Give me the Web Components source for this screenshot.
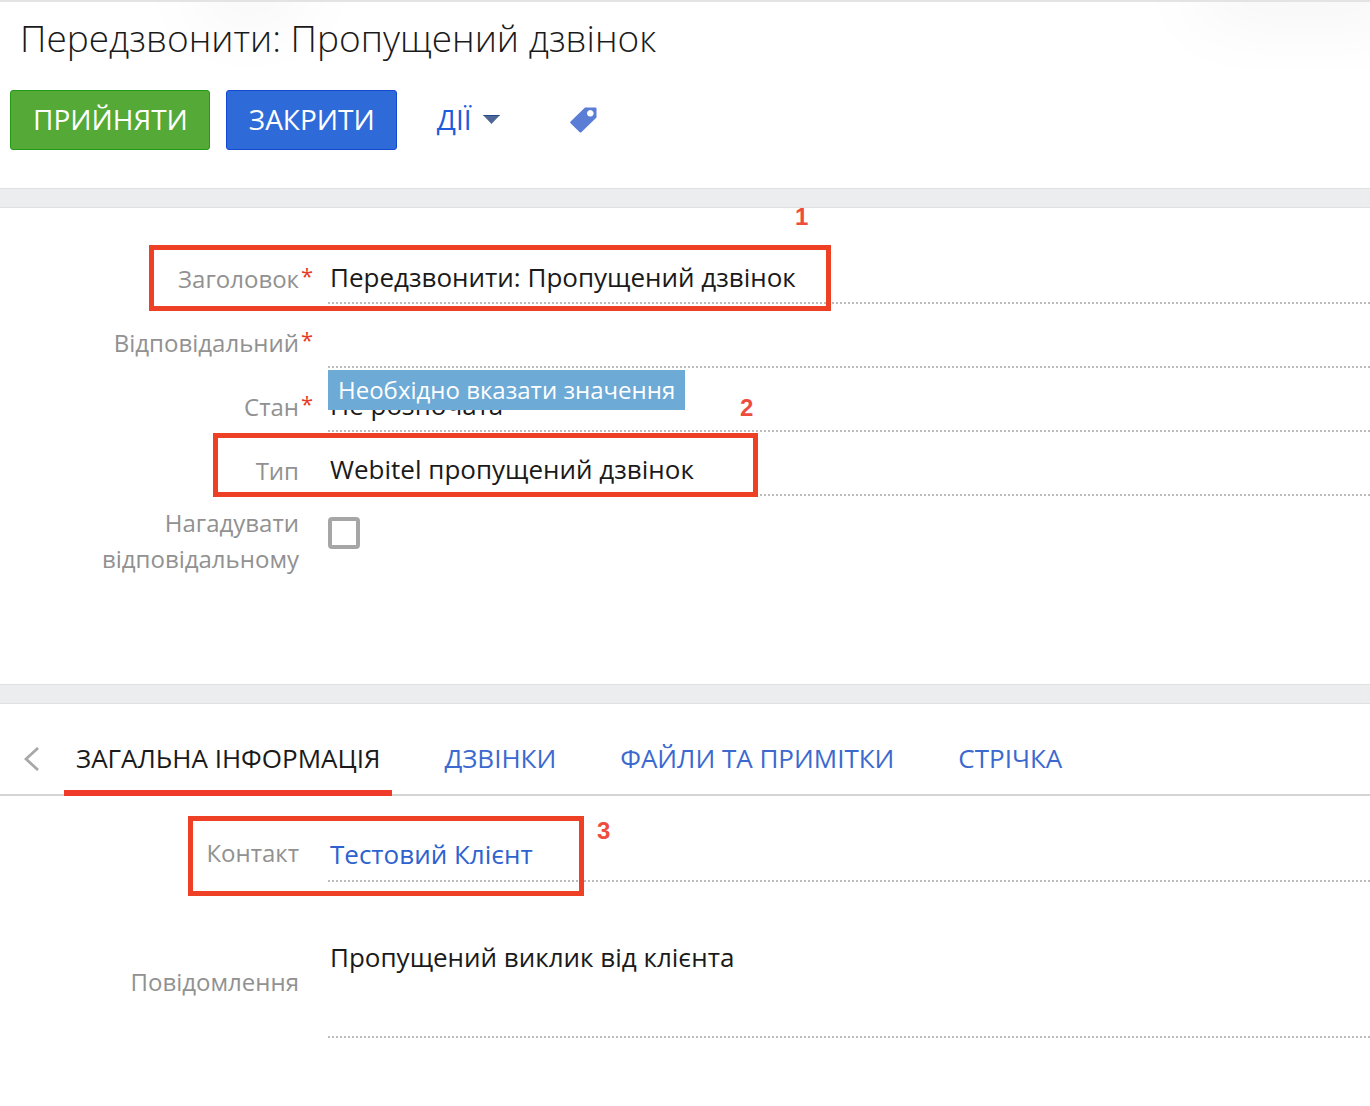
<!DOCTYPE html>
<html lang="uk">
<head>
<meta charset="utf-8">
<meta name="viewport" content="width=device-width, initial-scale=1">
<title>Передзвонити: Пропущений дзвінок</title>
<style>
  body {
    margin: 0;
    background: #fff;
    color: #1a1a1a;
    font-family: "Open Sans", "Noto Sans", sans-serif;
    font-size: 26px;
  }
</style>
</head>
<body>

<task-page>
  <page-header slot="header">
    <span slot="title">Передзвонити: Пропущений дзвінок</span>
    <action-button slot="actions" color="green">ПРИЙНЯТИ</action-button>
    <action-button slot="actions" color="blue">ЗАКРИТИ</action-button>
    <actions-menu slot="actions">ДІЇ</actions-menu>
    <tag-button slot="actions"></tag-button>
  </page-header>

  <form-section slot="profile" class="profile">
    <form-field label="Заголовок" value="Передзвонити: Пропущений дзвінок" required></form-field>
    <form-field label="Відповідальний" error="Необхідно вказати значення" required></form-field>
    <form-field label="Стан" value="Не розпочата" required></form-field>
    <form-field label="Тип" value="Webitel пропущений дзвінок"></form-field>
    <form-field label="Нагадувати відповідальному" type="checkbox"></form-field>
    <mark-box slot="marks" x="149" y="37" width="682" height="66"></mark-box>
    <mark-number slot="marks" x="795" y="-5">1</mark-number>
    <mark-box slot="marks" x="213" y="225" width="545" height="64"></mark-box>
    <mark-number slot="marks" x="740" y="186">2</mark-number>
  </form-section>

  <tab-bar slot="tabs">
    <tab-link active>ЗАГАЛЬНА ІНФОРМАЦІЯ</tab-link>
    <tab-link>ДЗВІНКИ</tab-link>
    <tab-link>ФАЙЛИ ТА ПРИМІТКИ</tab-link>
    <tab-link>СТРІЧКА</tab-link>
  </tab-bar>

  <form-section slot="details" class="details">
    <form-field label="Контакт" value="Тестовий Клієнт" type="link"></form-field>
    <form-field label="Повідомлення" value="Пропущений виклик від клієнта" type="memo"></form-field>
    <mark-box slot="marks" x="188" y="20" width="396" height="80"></mark-box>
    <mark-number slot="marks" x="597" y="21">3</mark-number>
  </form-section>
</task-page>

<script>
class BaseElement extends HTMLElement {
  render(html) {
    if (!this.shadowRoot) {
      this.attachShadow({mode: 'open'});
    }
    this.shadowRoot.innerHTML = html;
  }
}

class TaskPage extends BaseElement {
  connectedCallback() {
    this.render(`
      <style>
        :host { display: block; }
        .band {
          box-sizing: border-box;
          height: 20px;
          background: #ebedee;
          border-top: 1px solid #dfe0e0;
          border-bottom: 1px solid #dfe0e0;
        }
      </style>
      <slot name="header"></slot>
      <div class="band"></div>
      <slot name="profile"></slot>
      <div class="band"></div>
      <slot name="tabs"></slot>
      <slot name="details"></slot>
    `);
  }
}

class PageHeader extends BaseElement {
  connectedCallback() {
    this.render(`
      <style>
        :host {
          display: block;
          position: relative;
          overflow: hidden;
          border-top: 2px solid #e3e3e3;
          padding: 10px 10px 38px;
        }
        /* soft shadows falling from the panels above the page */
        :host::before, :host::after {
          content: "";
          position: absolute;
          top: -22px;
          height: 20px;
          box-shadow: 0 0 80px rgba(0, 0, 0, .14);
        }
        :host::before { left: 200px; width: 100px; }
        :host::after { left: 1200px; right: -40px; }
        h1 {
          margin: 0 0 26px;
          padding: 0 10px;
          font-size: 37px;
          font-weight: 300;
          line-height: 52px;
        }
        .actions { display: flex; align-items: center; }
      </style>
      <h1><slot name="title"></slot></h1>
      <div class="actions"><slot name="actions"></slot></div>
    `);
  }
}

class ActionButton extends BaseElement {
  connectedCallback() {
    this.render(`
      <style>
        :host { display: block; margin-right: 16px; }
        button {
          height: 60px;
          padding: 0 21px 2px 22px;
          border: 1px solid #239a14;
          border-radius: 3px;
          background: #54a937;
          color: #fff;
          font: inherit;
          font-size: 28px;
          cursor: pointer;
        }
        :host([color="blue"]) button { background: #2f6ad9; border-color: #1247cf; }
      </style>
      <button type="button"><slot></slot></button>
    `);
  }
}

class ActionsMenu extends BaseElement {
  connectedCallback() {
    this.render(`
      <style>
        :host { display: block; margin: 0 70px 0 24px; }
        button {
          display: flex;
          align-items: center;
          gap: 11px;
          padding: 0 0 2px;
          border: 0;
          background: none;
          color: #1f5bdc;
          font: inherit;
          font-size: 28px;
          cursor: pointer;
        }
      </style>
      <button type="button" aria-haspopup="true">
        <slot></slot>
        <svg width="17" height="9" viewBox="0 0 17 9"><path d="M0 0h17L8.500 9z" fill="#4f6797"/><path d="M0 0h17l-1 1H1z" fill="#244a8c"/></svg>
      </button>
    `);
  }
}

class TagButton extends BaseElement {
  connectedCallback() {
    this.render(`
      <style>
        :host { display: block; }
        button { display: block; padding: 0; border: 0; background: none; cursor: pointer; }
        svg { display: block; }
      </style>
      <button type="button" aria-label="Теги">
        <svg width="27" height="26" viewBox="0 0 27 26">
          <path fill="#5a7dd6" fill-rule="evenodd" d="M15 .5h10.500q1 0 1 1V10.500L11.300 25.200q-.8.700-1.600 0L.6 16.200q-.8-.8 0-1.600zM20.300 3a3.300 3.300 0 1 0 .01 0z"/>
        </svg>
      </button>
    `);
  }
}

class FormSection extends BaseElement {
  connectedCallback() {
    this.render(`
      <style>
        :host { display: block; position: relative; }
        :host(.profile) { padding: 32px 0 107px; }
        :host(.details) { padding: 22px 0 64px; }
      </style>
      <slot></slot>
      <slot name="marks"></slot>
    `);
  }
}

class FormField extends BaseElement {
  control() {
    const value = this.getAttribute('value') || '';
    switch (this.getAttribute('type')) {
      case 'checkbox':
        return '<input id="control" type="checkbox">';
      case 'link':
        return `<a id="control" class="line" href="#" aria-labelledby="label">${value}</a>`;
      case 'memo':
        return `<textarea id="control" class="line">${value}</textarea>`;
      default:
        return `<input id="control" class="line" type="text" value="${value}">`;
    }
  }

  connectedCallback() {
    const error = this.getAttribute('error');
    this.render(`
      <style>
        :host {
          display: grid;
          grid-template-columns: 299px 29px minmax(0, 1fr);
          align-items: center;
          position: relative;
        }
        label {
          color: #919191;
          font-size: 24px;
          line-height: 36px;
          padding: 14px 0 0 90px;
          text-align: right;
        }
        .star {
          align-self: start;
          padding: 17px 0 0 2px;
          color: #ea3a24;
          font-size: 22px;
          line-height: 36px;
        }
        .line {
          display: block;
          box-sizing: border-box;
          width: 100%;
          height: 64px;
          margin: 0;
          padding: 12px 2px 0;
          border: 0;
          border-bottom: 2px dotted #bdbdbd;
          border-radius: 0;
          outline: none;
          background: none;
          color: inherit;
          font: inherit;
          line-height: 48px;
        }
        a.line { color: #2d62cf; text-decoration: none; }
        :host([type="link"]) { margin-bottom: 28px; }
        :host([type="link"]) label { padding-top: 6px; }
        textarea.line { height: 128px; padding-top: 23px; resize: none; overflow: hidden; }
        :host([type="memo"]) label { padding-top: 16px; }
        :host([type="checkbox"]) label { padding-top: 9px; }
        input[type="checkbox"] {
          appearance: none;
          align-self: start;
          box-sizing: border-box;
          width: 32px;
          height: 32px;
          margin: 21px 0 0;
          border: 4px solid #a6a6a6;
          border-radius: 4px;
          background: #fff;
        }
        .error {
          position: absolute;
          z-index: 1;
          top: 66px;
          left: 328px;
          padding: 0 10px;
          background: #6daad6;
          color: #fff;
          font-size: 24px;
          line-height: 40px;
        }
      </style>
      <label id="label" for="control">${this.getAttribute('label')}</label>
      <span class="star">${this.hasAttribute('required') ? '*' : ''}</span>
      ${this.control()}
      ${error ? `<div class="error" role="alert">${error}</div>` : ''}
    `);
  }
}

class TabBar extends BaseElement {
  connectedCallback() {
    this.render(`
      <style>
        :host {
          display: flex;
          box-sizing: border-box;
          height: 92px;
          padding-left: 24px;
          border-bottom: 2px solid #d4d4d4;
        }
        button { padding: 20px 0 0; border: 0; background: none; cursor: pointer; }
        svg { display: block; }
        nav { display: flex; gap: 40px; margin-left: 25px; }
      </style>
      <button type="button" aria-label="Назад">
        <svg width="15" height="24" viewBox="0 0 15 24"><path d="M14 1L2 12l12 11" fill="none" stroke="#a8a8a8" stroke-width="2.800"/></svg>
      </button>
      <nav><slot></slot></nav>
    `);
  }
}

class TabLink extends BaseElement {
  connectedCallback() {
    this.render(`
      <style>
        :host { display: block; }
        a {
          display: block;
          box-sizing: border-box;
          height: 92px;
          padding: 36px 12px 0;
          border-bottom: 6px solid transparent;
          color: #3b69cf;
          line-height: 36px;
          text-decoration: none;
          white-space: nowrap;
        }
        :host([active]) a { color: #1a1a1a; border-color: #f03b2a; }
      </style>
      <a href="#"><slot></slot></a>
    `);
  }
}

class MarkBox extends BaseElement {
  connectedCallback() {
    this.render(`
      <style>
        :host {
          position: absolute;
          z-index: 2;
          box-sizing: border-box;
          border: 5px solid #ed4025;
          pointer-events: none;
        }
      </style>
    `);
    this.style.left = `${this.getAttribute('x')}px`;
    this.style.top = `${this.getAttribute('y')}px`;
    this.style.width = `${this.getAttribute('width')}px`;
    this.style.height = `${this.getAttribute('height')}px`;
  }
}

class MarkNumber extends BaseElement {
  connectedCallback() {
    this.render(`
      <style>
        :host {
          position: absolute;
          z-index: 2;
          color: #ee4d3d;
          font: bold 24px/28px "Liberation Sans", sans-serif;
        }
      </style>
      <slot></slot>
    `);
    this.style.left = `${this.getAttribute('x')}px`;
    this.style.top = `${this.getAttribute('y')}px`;
  }
}

customElements.define('task-page', TaskPage);
customElements.define('page-header', PageHeader);
customElements.define('action-button', ActionButton);
customElements.define('actions-menu', ActionsMenu);
customElements.define('tag-button', TagButton);
customElements.define('form-section', FormSection);
customElements.define('form-field', FormField);
customElements.define('tab-bar', TabBar);
customElements.define('tab-link', TabLink);
customElements.define('mark-box', MarkBox);
customElements.define('mark-number', MarkNumber);
</script>
</body>
</html>
